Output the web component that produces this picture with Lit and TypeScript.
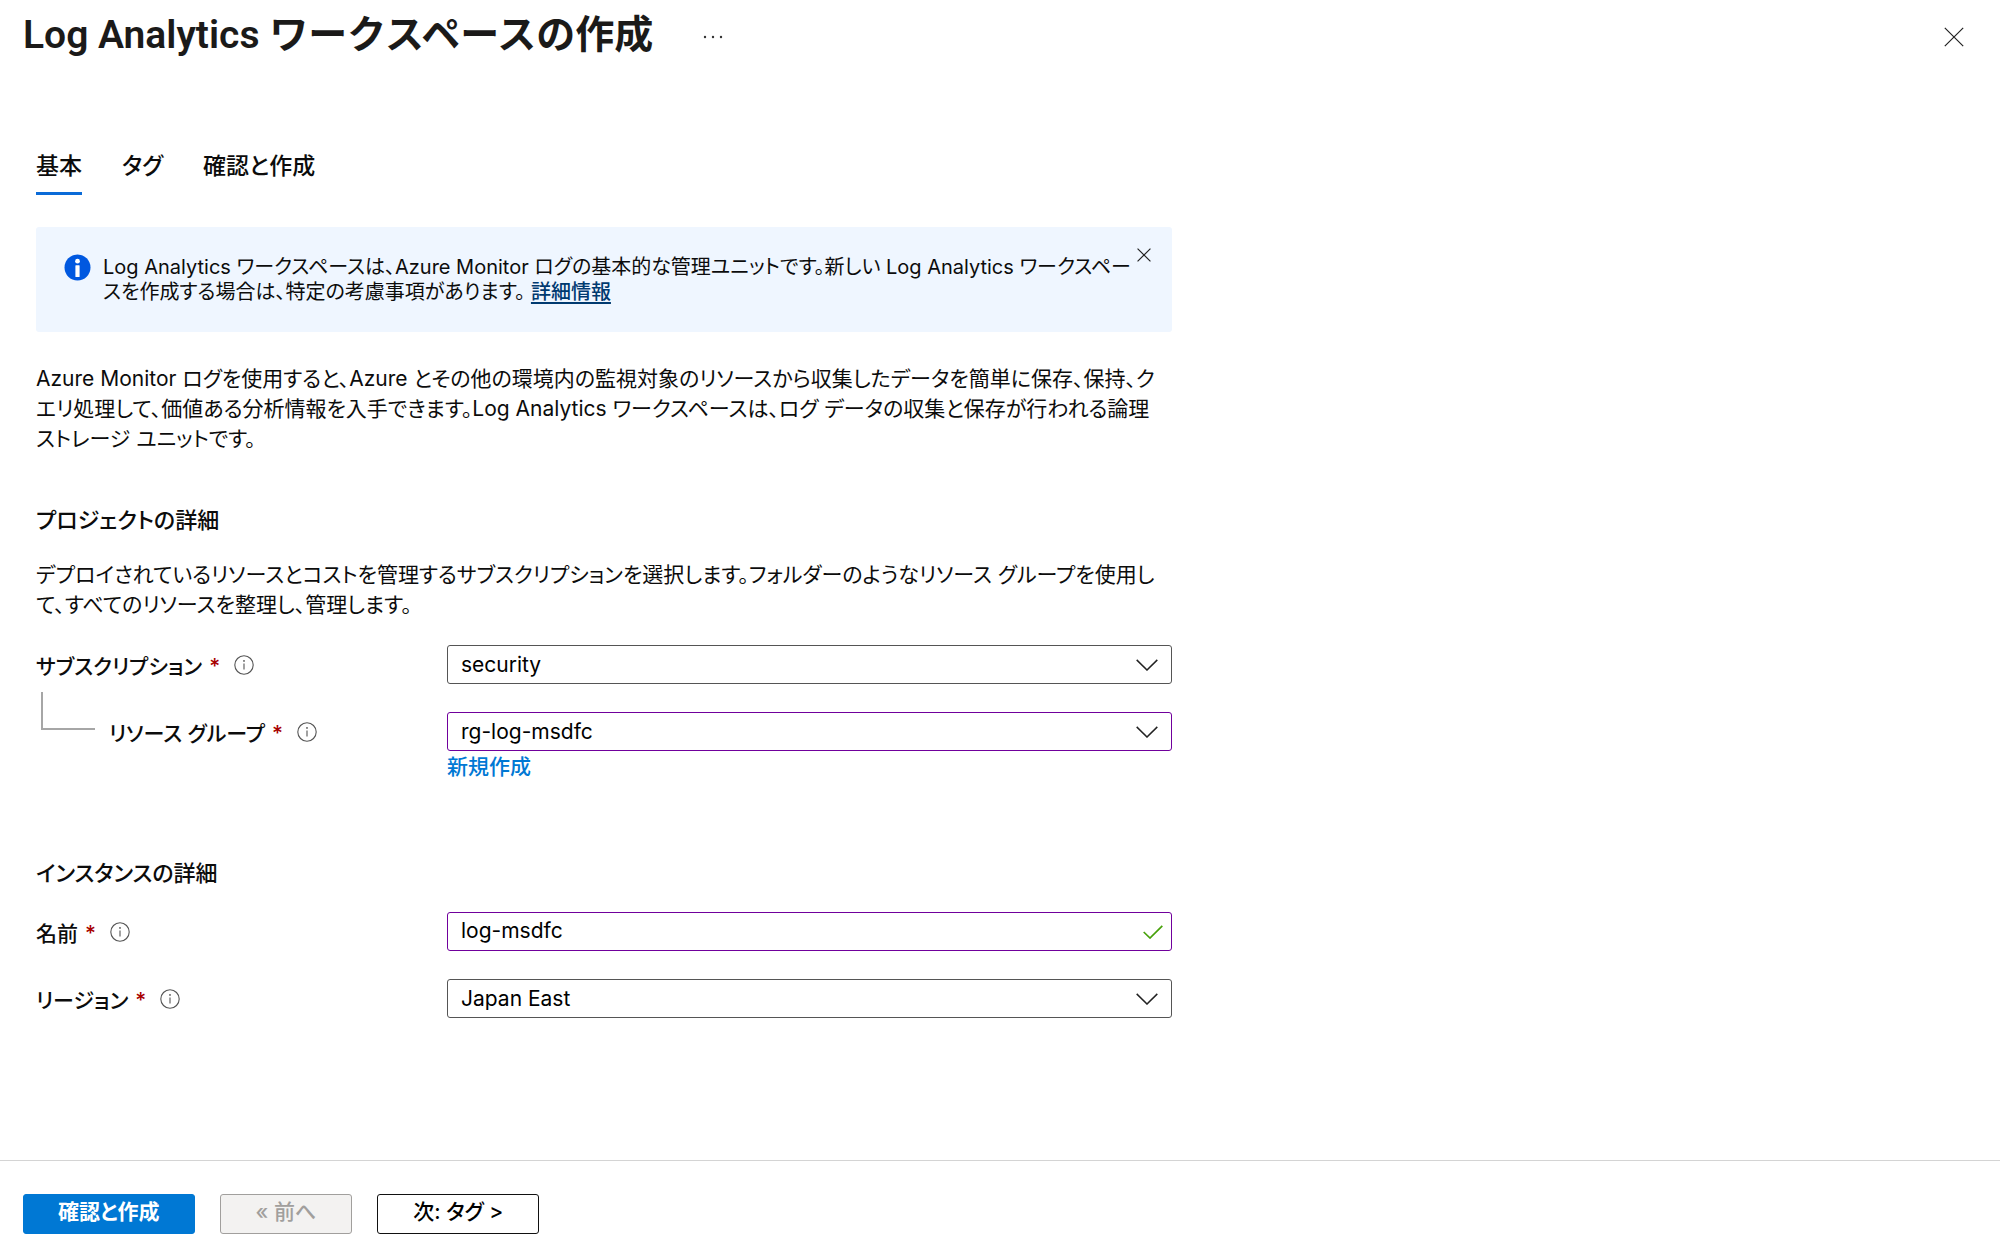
import { LitElement, html, css, nothing } from "lit";
import { customElement, property } from "lit/decorators.js";

/** Small outlined "i" shown after a field label. */
const infoGlyph = html`<svg class="info" viewBox="0 0 20 20" aria-hidden="true">
  <circle cx="10" cy="10" r="9.2" fill="none" stroke="#555" stroke-width="1.1" />
  <path d="M10 8.4v6" stroke="#555" stroke-width="1.1" />
  <circle cx="10" cy="5.9" r="0.9" fill="#555" />
</svg>`;

const crossGlyph = html`<svg viewBox="0 0 20 20" aria-hidden="true">
  <path d="M0.8 0.8 19.2 19.2M19.2 0.8 0.8 19.2" fill="none" stroke="currentColor" vector-effect="non-scaling-stroke" stroke-width="1.2" />
</svg>`;

@customElement("form-field")
class FormField extends LitElement {
  @property() label = "";
  @property() value = "";
  @property() kind: "select" | "text" = "select";
  @property({ type: Boolean }) edited = false;
  @property({ type: Boolean }) nested = false;

  static styles = css`
    :host { display: block; }
    .row { display: grid; grid-template-columns: 411px minmax(0, 1fr); align-items: center; }
    .caption { display: flex; align-items: center; height: 39px; }
    .branch {
      width: 54px;
      height: 38px;
      margin: 0 14px 42px 5px;
      border: solid #a6a6a6;
      border-width: 0 0 2px 2px;
      box-sizing: border-box;
    }
    label { font-size: 21px; line-height: 30px; font-weight: 500; white-space: nowrap; padding-top: 4px; }
    .star { color: #a80000; margin-left: 7px; }
    .info { width: 20px; height: 20px; margin-left: 14px; flex: none; }
    .control { display: grid; align-items: center; }
    .control > * { grid-area: 1 / 1; }
    select, input {
      width: 100%;
      height: 39px;
      box-sizing: border-box;
      margin: 0;
      padding: 0 48px 0 13px;
      border: 1px solid #555;
      border-radius: 3px;
      background: #fff;
      color: #000;
      font: inherit;
      font-size: 21px;
      appearance: none;
      outline: none;
    }
    input { padding-bottom: 2px; }
    .edited { border-color: #70009c; }
    .mark { justify-self: end; pointer-events: none; fill: none; }
    .chevron { width: 22px; height: 12px; margin-right: 14px; stroke: #222; stroke-width: 1.5; }
    .check { width: 20px; height: 14px; margin-right: 9px; stroke: #47a10a; stroke-width: 1.7; }
  `;

  render() {
    const cls = this.edited ? "edited" : "";
    return html`<div class="row">
      <div class="caption">
        ${this.nested ? html`<span class="branch"></span>` : nothing}
        <label for="control">${this.label}<span class="star">*</span></label>
        ${infoGlyph}
      </div>
      <div class="control">
        ${this.kind === "select"
          ? html`<select id="control" class=${cls} required><option>${this.value}</option></select>
              <svg class="mark chevron" viewBox="0 0 22 12" aria-hidden="true"><path d="M0.7 0.9 11 11 21.3 0.9" /></svg>`
          : html`<input id="control" class=${cls} type="text" required .value=${this.value} />
              <svg class="mark check" viewBox="0 0 20 14" aria-hidden="true"><path d="M0.7 7 7 13 19.3 0.8" /></svg>`}
      </div>
    </div>`;
  }
}

@customElement("app-root")
class AppRoot extends LitElement {
  static styles = css`
    :host {
      display: flex;
      flex-direction: column;
      min-height: 100vh;
      background: #fff;
      color: #0c0c0c;
      font: 400 21px/30px Inter, "Noto Sans CJK JP", sans-serif;
      font-feature-settings: "palt";
    }
    h1, h2, p { margin: 0; }
    button { font: inherit; font-feature-settings: inherit; cursor: pointer; }
    header { display: flex; align-items: center; padding: 10px 34px 0 23px; }
    h1 { padding-bottom: 4px; font: 600 39px/50px Roboto, "Noto Sans CJK JP", sans-serif; color: #1b1a19; }
    .plain { display: grid; place-items: center; padding: 0; border: 0; background: none; color: #222; }
    .more { width: 32px; height: 32px; margin-left: 44px; }
    .more svg { width: 20px; height: 4px; }
    .close { width: 24px; height: 24px; margin-left: auto; }
    .close svg { width: 20px; height: 20px; }
    main { flex: 1; box-sizing: border-box; max-width: 1208px; padding: 86px 36px 40px; }
    .tabs { display: flex; gap: 40px; margin-bottom: 32px; }
    .tab {
      padding: 0 0 10px;
      border: 0;
      border-bottom: 3px solid transparent;
      background: none;
      color: inherit;
      font-weight: 500;
      font-size: 23px;
      line-height: 32px;
    }
    .tab.on { border-color: #0a6bd8; }
    .banner {
      display: flex;
      align-items: flex-start;
      padding: 16px 16px 27px 28px;
      border-radius: 3px;
      background: #eff6ff;
      font-size: 20px;
      line-height: 25px;
    }
    .badge { width: 27px; height: 27px; margin-top: 11px; flex: none; }
    .banner p { flex: 1; min-width: 0; margin: 12px 0 0 12px; white-space: nowrap; }
    .banner a { color: #003a70; font-weight: 500; text-underline-offset: 3px; margin-left: 6px; }
    .dismiss { width: 24px; height: 24px; flex: none; }
    .dismiss svg { width: 14px; height: 14px; }
    .copy { white-space: nowrap; }
    .intro { margin-top: 32px; }
    h2 { font-size: 22px; line-height: 32px; font-weight: 500; }
    .project { margin: 50px 0 24px; }
    .fields { display: grid; gap: 28px; }
    .first { margin-top: 25px; }
    .create { display: inline-block; margin: 1px 0 0 411px; color: #0078d4; font-weight: 500; text-decoration: none; }
    .instance { margin: 75px 0 23px; }
    footer { display: flex; gap: 25px; padding: 33px 23px 21px; border-top: 1px solid #d4d4d4; }
    .action {
      height: 40px;
      border: 1px solid #111;
      border-radius: 3px;
      background: #fff;
      color: #000;
      font-weight: 500;
      line-height: 30px;
      padding: 0 35px 4px;
    }
    .primary { padding: 0 34px 4px; border-color: #0078d4; background: #0078d4; color: #fff; font-weight: 700; }
    .action:disabled { border-color: #a19f9d; background: #f3f2f1; color: #a19f9d; cursor: default; }
  `;

  render() {
    return html`
      <header>
        <h1>Log Analytics ワークスペースの作成</h1>
        <button class="plain more" aria-label="その他">
          <svg viewBox="0 0 20 4" fill="#333" aria-hidden="true">
            <circle cx="2" cy="2" r="1.2" /><circle cx="10" cy="2" r="1.2" /><circle cx="18" cy="2" r="1.2" />
          </svg>
        </button>
        <button class="plain close" aria-label="閉じる">${crossGlyph}</button>
      </header>
      <main>
        <nav class="tabs" role="tablist">
          <button class="tab on" role="tab" aria-selected="true">基本</button>
          <button class="tab" role="tab">タグ</button>
          <button class="tab" role="tab">確認と作成</button>
        </nav>
        <section class="banner">
          <svg class="badge" viewBox="0 0 27 27" aria-hidden="true">
            <circle cx="13.5" cy="13.5" r="13" fill="#0058e0" />
            <circle cx="13.5" cy="7.2" r="2.4" fill="#fff" />
            <rect x="11.4" y="11.2" width="4.2" height="11.8" rx="0.6" fill="#fff" />
          </svg>
          <p>
            Log Analytics ワークスペースは、Azure Monitor ログの基本的な管理ユニットです。新しい Log Analytics ワークスペー<br />スを作成する場合は、特定の考慮事項があります。<a href="#details">詳細情報</a>
          </p>
          <button class="plain dismiss" aria-label="閉じる">${crossGlyph}</button>
        </section>
        <p class="copy intro">
          Azure Monitor ログを使用すると、Azure とその他の環境内の監視対象のリソースから収集したデータを簡単に保存、保持、ク<br />エリ処理して、価値ある分析情報を入手できます。Log Analytics ワークスペースは、ログ データの収集と保存が行われる論理<br />ストレージ ユニットです。
        </p>
        <h2 class="project">プロジェクトの詳細</h2>
        <p class="copy">
          デプロイされているリソースとコストを管理するサブスクリプションを選択します。フォルダーのようなリソース グループを使用し<br />て、すべてのリソースを整理し、管理します。
        </p>
        <div class="fields first">
          <form-field label="サブスクリプション" value="security"></form-field>
          <form-field label="リソース グループ" value="rg-log-msdfc" edited nested></form-field>
        </div>
        <a class="create" href="#new">新規作成</a>
        <h2 class="instance">インスタンスの詳細</h2>
        <div class="fields">
          <form-field kind="text" label="名前" value="log-msdfc" edited></form-field>
          <form-field label="リージョン" value="Japan East"></form-field>
        </div>
      </main>
      <footer>
        <button class="action primary">確認と作成</button>
        <button class="action" disabled>« 前へ</button>
        <button class="action">次: タグ &gt;</button>
      </footer>
    `;
  }
}
